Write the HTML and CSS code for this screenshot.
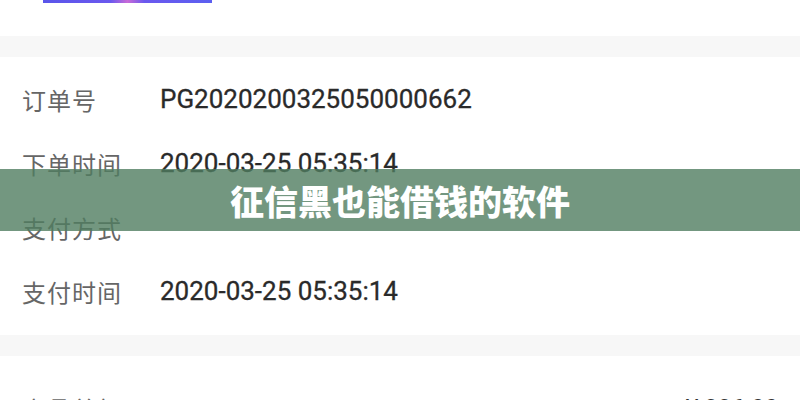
FILE: index.html
```html
<!DOCTYPE html>
<html lang="zh">
<head>
<meta charset="utf-8">
<link rel="stylesheet" href="styles.css">
</head>
<body>
<div class="page">
  <div class="top">
    <div class="banner-img"></div>
  </div>
  <div class="gap"></div>
  <div class="section">
    <div class="row"><span class="label">订单号</span><span class="value">PG2020200325050000662</span></div>
    <div class="row"><span class="label">下单时间</span><span class="value">2020-03-25 05:35:14</span></div>
    <div class="row"><span class="label">支付方式</span><span class="value"></span></div>
    <div class="row"><span class="label">支付时间</span><span class="value">2020-03-25 05:35:14</span></div>
  </div>
  <div class="gap"></div>
  <div class="section section2">
    <div class="row row-between"><span class="label">商品总额</span><span class="price">¥ 336.00</span></div>
  </div>
  <div class="overlay">征信黑也能借钱的软件</div>
</div>
</body>
</html>
```
FILE: styles.css
```css
html, body {
  margin: 0;
  padding: 0;
  background: #ffffff;
}
.page {
  position: relative;
  width: 800px;
  height: 400px;
  overflow: hidden;
  font-family: Roboto, "Noto Sans CJK SC", sans-serif;
}
.top {
  height: 36px;
  padding-left: 43px;
}
.banner-img {
  width: 169px;
  height: 3px;
  background: linear-gradient(90deg, #5a55ea 0%, #6a58ee 40%, #c86ad8 50%, #6a58ee 60%, #5b5ff0 100%);
}
.gap {
  height: 21px;
  background: #f7f7f7;
}
.section {
  padding: 10px 0 12px 22px;
}
.section2 {
  padding: 20px 22px 0 22px;
}
.row {
  height: 64px;
  display: flex;
  align-items: center;
}
.row-between {
  justify-content: space-between;
}
.label {
  width: 138px;
  font-family: "Noto Sans CJK SC", sans-serif;
  font-size: 24px;
  color: #666666;
  letter-spacing: 1px;
}
.value {
  font-family: Roboto, sans-serif;
  font-size: 26px;
  font-weight: 400;
  color: #2a2a2a;
  -webkit-text-stroke: 0.3px #2a2a2a;
}
.price {
  font-family: Roboto, sans-serif;
  font-size: 24px;
  color: #333333;
}
.overlay {
  position: absolute;
  left: 0;
  top: 169px;
  width: 800px;
  height: 62px;
  display: flex;
  align-items: center;
  justify-content: center;
  background: rgba(80, 125, 96, 0.8);
  color: #ffffff;
  font-family: "Noto Sans CJK SC", sans-serif;
  font-weight: 900;
  font-size: 34px;
}
```
